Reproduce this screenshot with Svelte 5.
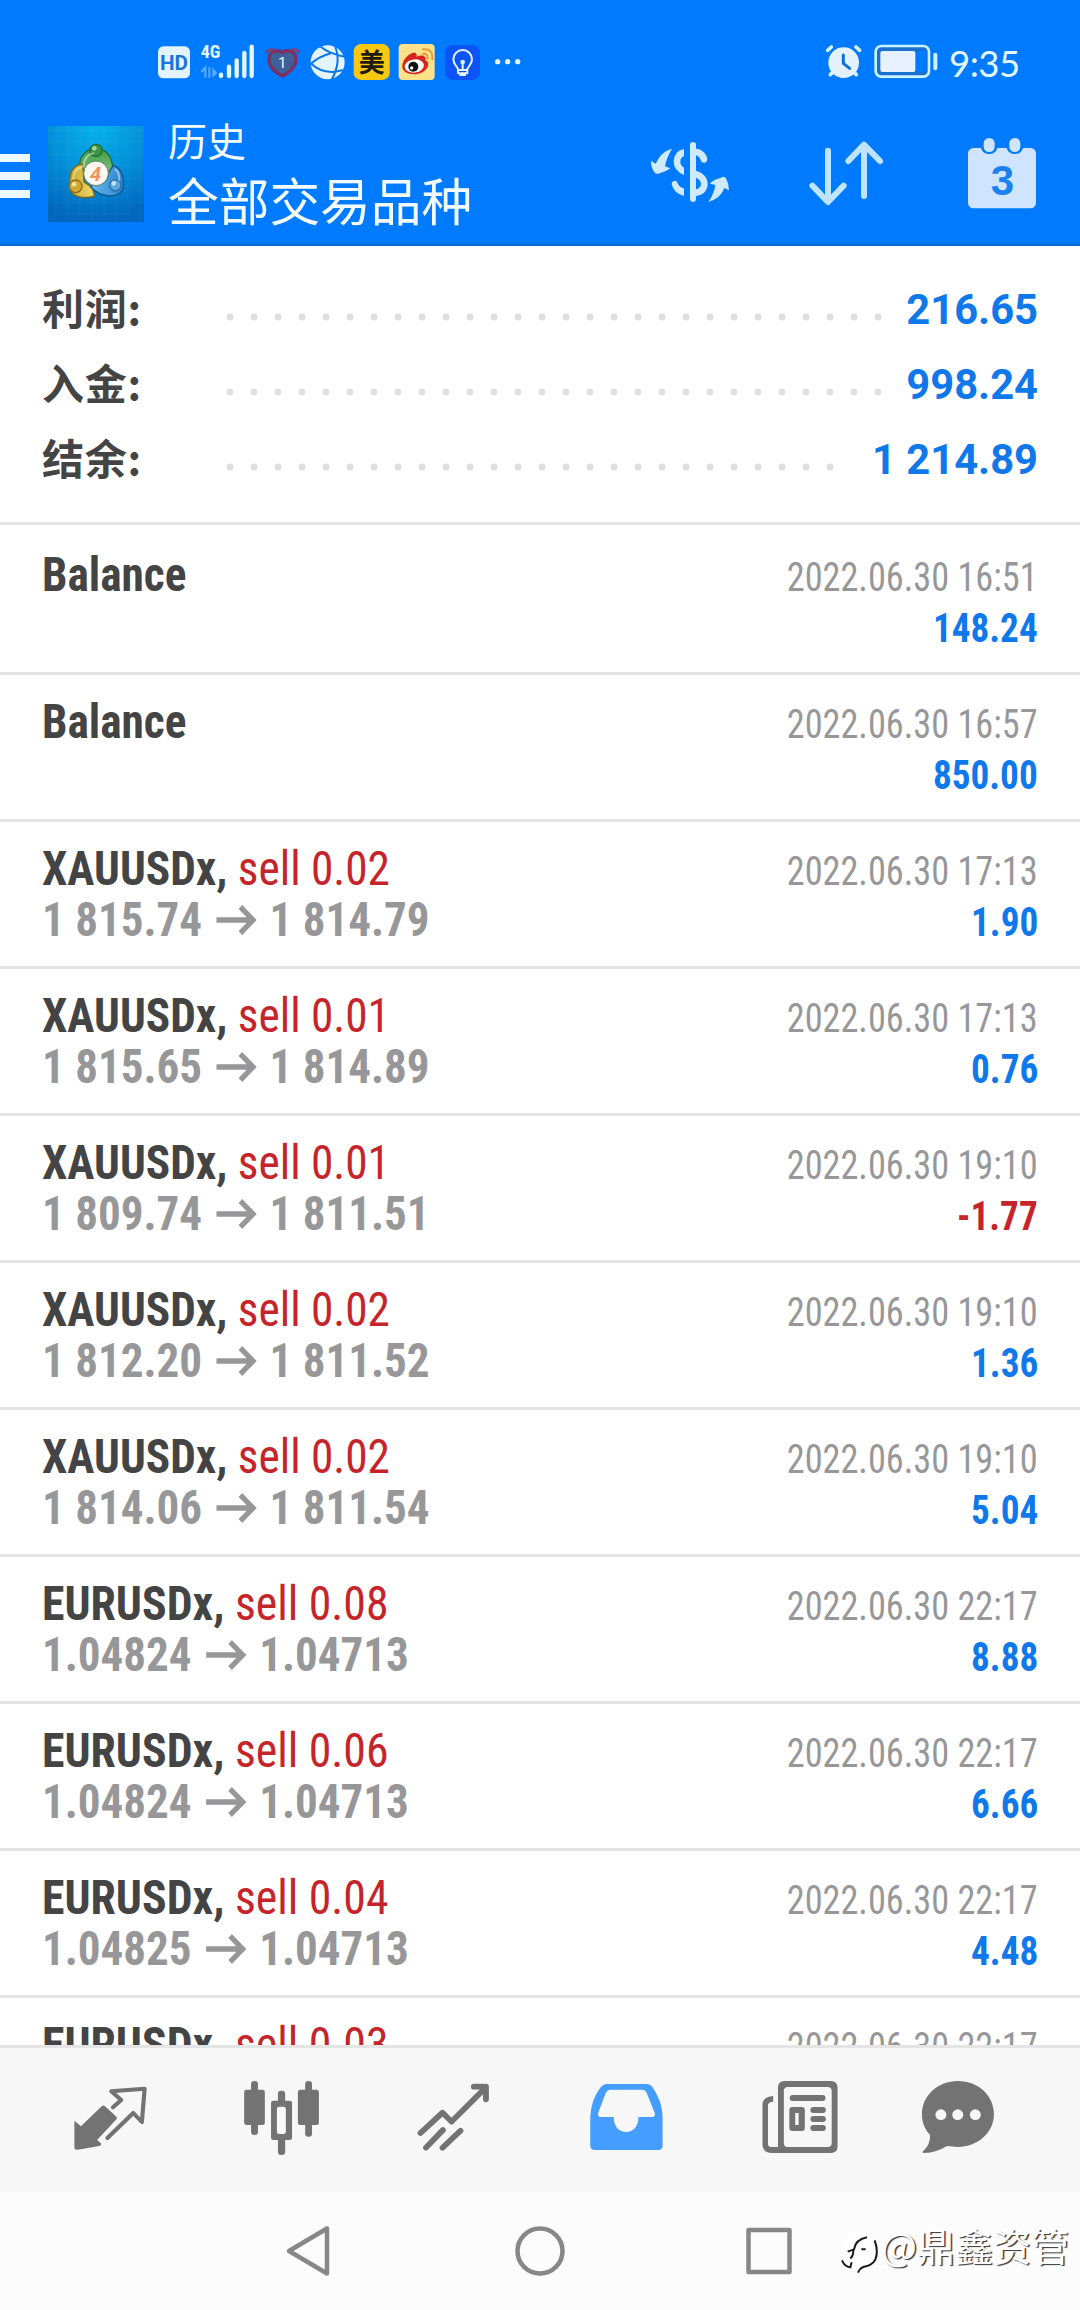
<script lang="ts">
  type Deal = {
    symbol: string;
    volume?: string;
    open?: string;
    close?: string;
    time: string;
    profit: string;
  };

  const summary = [
    { label: '利润:', value: '216.65' },
    { label: '入金:', value: '998.24' },
    { label: '结余:', value: '1 214.89' },
  ];

  const deals: Deal[] = [
    { symbol: 'Balance', time: '2022.06.30 16:51', profit: '148.24' },
    { symbol: 'Balance', time: '2022.06.30 16:57', profit: '850.00' },
    { symbol: 'XAUUSDx', volume: '0.02', open: '1 815.74', close: '1 814.79', time: '2022.06.30 17:13', profit: '1.90' },
    { symbol: 'XAUUSDx', volume: '0.01', open: '1 815.65', close: '1 814.89', time: '2022.06.30 17:13', profit: '0.76' },
    { symbol: 'XAUUSDx', volume: '0.01', open: '1 809.74', close: '1 811.51', time: '2022.06.30 19:10', profit: '-1.77' },
    { symbol: 'XAUUSDx', volume: '0.02', open: '1 812.20', close: '1 811.52', time: '2022.06.30 19:10', profit: '1.36' },
    { symbol: 'XAUUSDx', volume: '0.02', open: '1 814.06', close: '1 811.54', time: '2022.06.30 19:10', profit: '5.04' },
    { symbol: 'EURUSDx', volume: '0.08', open: '1.04824', close: '1.04713', time: '2022.06.30 22:17', profit: '8.88' },
    { symbol: 'EURUSDx', volume: '0.06', open: '1.04824', close: '1.04713', time: '2022.06.30 22:17', profit: '6.66' },
    { symbol: 'EURUSDx', volume: '0.04', open: '1.04825', close: '1.04713', time: '2022.06.30 22:17', profit: '4.48' },
    { symbol: 'EURUSDx', volume: '0.03', open: '1.04825', close: '1.04713', time: '2022.06.30 22:17', profit: '3.36' },
  ];
</script>

<div class="screen">
  <header>
    <div class="status">
      <div class="status-left">
        <!-- HD badge -->
        <svg viewBox="50 0 115 210">
          <rect x="53" y="49" width="96" height="96" rx="16" fill="#e3f3ff" />
          <text x="101" y="120" class="hd">HD</text>
        </svg>
        <!-- 4G signal -->
        <svg viewBox="165 0 195 210">
          <text x="182" y="85" class="net">4G</text>
          <path d="M196 143V112L184 126M208 112V143" fill="none" stroke="#5bacff" stroke-width="6" />
          <path d="M217 112V143L232 129Z" fill="#5bacff" />
          <g stroke="#e3f8ff" stroke-width="13" stroke-linecap="round">
            <path d="M243 134V138M267 110V138M290 91V138M313 69V138M335 50V138" />
          </g>
        </svg>
        <!-- heart alarm -->
        <svg viewBox="360 0 135 210">
          <path d="M379 70Q382 56 402 59M453 59Q473 56 476 70" fill="none" stroke="#6f4a80" stroke-width="9" />
          <path d="M427 138C404 126 386 108 387 86C389 61 414 58 427 67C440 58 466 61 468 86C468 108 450 126 427 138Z" fill="#3d6098" stroke="#7d2f60" stroke-width="10" />
          <text x="427" y="113" class="one">1</text>
        </svg>
        <!-- globe -->
        <svg viewBox="495 0 133 210">
          <circle cx="563" cy="97" r="51" fill="#e3f4ff" />
          <g fill="none" stroke="#0a78ea" stroke-width="6">
            <path d="M542 50Q566 70 614 80M586 51Q604 97 575 149M572 70Q536 80 511 103M511 99Q552 138 608 120" />
          </g>
        </svg>
        <!-- meituan -->
        <svg viewBox="628 0 135 210">
          <rect x="642" y="42" width="108" height="108" rx="22" fill="#f8c811" />
          <text x="696" y="126" class="mei">美</text>
        </svg>
        <!-- weibo -->
        <svg viewBox="763 0 137 210">
          <rect x="777" y="42" width="108" height="108" rx="12" fill="#fae18a" />
          <path d="M788 112C786 92 806 72 818 69C828 66 834 73 830 80C844 73 862 76 857 91C870 96 867 108 860 117C844 139 792 139 788 112Z" fill="#d8241f" />
          <ellipse cx="824" cy="108" rx="29" ry="20" fill="#fff" transform="rotate(-8 824 108)" />
          <circle cx="821" cy="110" r="15" fill="#111" />
          <circle cx="816" cy="114" r="5" fill="#fff" />
          <path d="M850 72Q864 68 864 86M850 58Q880 54 878 88" fill="none" stroke="#e89a38" stroke-width="6" stroke-linecap="round" />
        </svg>
        <!-- bulb -->
        <svg viewBox="900 0 140 210">
          <rect x="915" y="45" width="105" height="105" rx="24" fill="#0b55f7" />
          <g fill="none" stroke="#e8f2ff" stroke-width="6" stroke-linejoin="round">
            <path d="M954 130V118C952 109 940 103 940 88A28 28 0 0 1 996 88C996 103 984 109 982 118V130ZM954 120H982M968 118V98" />
          </g>
          <circle cx="968" cy="96" r="7" fill="#e8f2ff" />
          <path d="M958 132H978V138H958Z" fill="#e8f2ff" />
        </svg>
        <svg viewBox="1040 0 120 210">
          <g fill="#e3f4ff">
            <circle cx="1072" cy="95" r="8" />
            <circle cx="1102" cy="95" r="8" />
            <circle cx="1132" cy="95" r="8" />
          </g>
        </svg>
      </div>
      <div class="status-right">
        <!-- alarm clock -->
        <svg viewBox="60 0 140 210">
          <g stroke="#d5f2ff" stroke-width="11" stroke-linecap="round">
            <path d="M83 61L94 51M179 61L168 51M91 134L98 127M169 134L162 127" />
          </g>
          <circle cx="131" cy="98" r="46" fill="#e3f1ff" />
          <path d="M130 75V100L149 115" fill="none" stroke="#1470cf" stroke-width="9" stroke-linecap="round" stroke-linejoin="round" />
        </svg>
        <!-- battery -->
        <svg viewBox="200 0 220 210">
          <rect x="226" y="48" width="160" height="92" rx="17" fill="#1a70d0" stroke="#c9f3ff" stroke-width="8" />
          <rect x="345" y="62" width="34" height="64" fill="#007aff" />
          <rect x="240" y="63" width="105" height="63" rx="6" fill="#e8f1ff" />
          <rect x="399" y="68" width="12" height="53" rx="6" fill="#c9f3ff" />
        </svg>
        <span class="clock">9:35</span>
      </div>
    </div>

    <div class="app-bar">
      <svg class="menu" viewBox="0 0 144 438">
        <path d="M0 162H90V186H0ZM0 216H90V240H0ZM0 270H90V294H0Z" fill="#eef9ff" />
      </svg>
      <svg class="logo" viewBox="144 78 288 288">
        <defs>
          <radialGradient id="sky" cx=".5" cy="0" r="1">
            <stop offset="0" stop-color="#06b2ee" />
            <stop offset=".5" stop-color="#0390d8" />
            <stop offset="1" stop-color="#0065bd" />
          </radialGradient>
          <linearGradient id="green" x2="0" y2="1">
            <stop offset="0" stop-color="#3c9a48" />
            <stop offset="1" stop-color="#8cc97c" />
          </linearGradient>
          <linearGradient id="gold">
            <stop offset="0" stop-color="#c9a228" />
            <stop offset="1" stop-color="#f1de6a" />
          </linearGradient>
          <linearGradient id="azure">
            <stop offset="0" stop-color="#66b8ec" />
            <stop offset="1" stop-color="#2b83cf" />
          </linearGradient>
        </defs>
        <rect x="144" y="78" width="288" height="288" fill="url(#sky)" />
        <path d="M168 78V366M204 78V366M240 78V366M276 78V366M312 78V366M348 78V366M384 78V366M420 78V366M144 90H432M144 126H432M144 162H432M144 198H432M144 234H432M144 270H432M144 306H432M144 342H432" stroke="#fff" stroke-opacity=".09" stroke-width="2" />
        <g stroke-width="4">
          <path d="M238 205C238 160 265 146 288 146C316 146 340 165 339 220L316 232C314 200 306 185 288 184C268 184 260 195 256 212Z" fill="url(#green)" stroke="#1d6c3d" />
          <path d="M248 192C212 196 208 225 208 262C214 292 250 298 284 288L276 262L252 246Z" fill="url(#gold)" stroke="#7a6a21" />
          <path d="M340 196C366 206 372 235 370 262C362 294 310 298 272 262L284 246C306 258 322 244 326 218Z" fill="url(#azure)" stroke="#16568f" />
          <circle cx="288" cy="151" r="18" fill="#3d9544" stroke="#236b32" />
          <circle cx="227" cy="259" r="19" fill="#d3a936" stroke="#8a6d20" />
          <circle cx="346" cy="256" r="17" fill="#5fa9da" stroke="#2a6ea8" />
        </g>
        <path d="M250 200Q254 164 280 160M220 236Q222 206 244 202M358 240Q358 216 346 208" fill="none" stroke="#fff" stroke-opacity=".45" stroke-width="6" stroke-linecap="round" />
        <circle cx="283" cy="145" r="7" fill="#a5d79c" />
        <circle cx="222" cy="253" r="7" fill="#f6e29a" />
        <circle cx="341" cy="250" r="7" fill="#c5e5f7" />
        <circle cx="288" cy="220" r="37" fill="#fff7f2" stroke="#586" stroke-width="3" />
        <text x="287" y="242" class="four">4</text>
      </svg>
      <div class="titles">
        <span class="title">历史</span>
        <span class="subtitle">全部交易品种</span>
      </div>
      <div class="tools">
        <!-- symbols -->
        <svg viewBox="60 0 420 408">
          <g fill="#cfe9ff">
            <path d="M156 116Q139 144 135 169L151 175Q140 184 121 189Q110 195 103 187Q92 170 93 152L107 161Q123 124 156 116Z" />
            <path d="M265 276Q283 250 286 225L270 221Q280 209 300 205Q310 196 318 205Q326 220 327 241L313 234Q303 264 265 276Z" />
            <path d="M210 104Q210 96 219 96Q228 96 228 104V116C246 116 262 134 262 148Q260 160 250 158Q242 156 242 149Q238 139 228 136V182C250 188 263 203 263 222C263 242 249 256 228 258V268Q227 276 219 276Q210 275 210 268ZM228 203V238Q243 233 243 221Q242 209 228 203Z" fill-rule="evenodd" />
            <path d="M192 117V138Q181 143 181 155Q181 166 192 173V195Q161 181 161 155Q162 123 192 117Z" />
            <path d="M192 235V258Q162 251 155 223Q155 212 166 212Q172 213 174 222Q179 232 192 235Z" />
          </g>
        </svg>
        <!-- sort -->
        <svg viewBox="480 0 450 408">
          <path d="M624 122V274M577 227L624 276L671 227M732 258V106M685 153L732 104L780 153" fill="none" stroke="#bfe4ff" stroke-width="18" stroke-linecap="round" stroke-linejoin="round" />
        </svg>
        <!-- calendar -->
        <svg viewBox="930 0 450 408">
          <rect x="1044" y="114" width="204" height="181" rx="16" fill="#cfe4ff" />
          <rect x="1082" y="78" width="51" height="54" rx="24" fill="#007aff" />
          <rect x="1159" y="78" width="51" height="54" rx="24" fill="#007aff" />
          <rect x="1091" y="84" width="33" height="42" rx="16" fill="#cfe4ff" />
          <rect x="1168" y="84" width="33" height="42" rx="16" fill="#cfe4ff" />
          <text x="1147" y="256" class="day">3</text>
        </svg>
      </div>
    </div>
  </header>

  <section class="summary">
    {#each summary as item}
      <div class="summary-row">
        <span class="label">{item.label}</span>
        <span class="leader"></span>
        <span class="total">{item.value}</span>
      </div>
    {/each}
  </section>

  <main>
    {#each deals as deal}
      <article>
        <div class="line">
          <span class="name" class:wide={deal.symbol === 'EURUSDx'}>
            {#if deal.volume}{deal.symbol}, <span class="side">sell {deal.volume}</span>{:else}{deal.symbol}{/if}
          </span>
          <time>{deal.time}</time>
        </div>
        <div class="line">
          <span class="prices">
            {#if deal.open}
              <span>{deal.open}</span>
              <svg class="arrow" viewBox="0 0 42 30">
                <path d="M0 15H39M25.500 2L39 15L25.500 28" fill="none" stroke="#979799" stroke-width="5.500" />
              </svg>
              <span>{deal.close}</span>
            {:else}
              <span>&nbsp;</span>
            {/if}
          </span>
          <span class="profit" class:loss={deal.profit.startsWith('-')}>{deal.profit}</span>
        </div>
      </article>
    {/each}
  </main>

  <nav class="tabs">
    <!-- quotes -->
    <svg viewBox="24 68 172 144">
      <g transform="scale(.3444 .3333)">
        <path d="M218 424L235 439L296 378Q300 375 304 378L338 410Q341 414 338 418L282 480L293 490Q295 496 288 498L226 509Q216 510 216 504V426Q216 422 218 424Z" fill="#737373" />
        <path d="M328 382L352 360L323 334L420 326L412 426L387 399L312 474" fill="none" stroke="#737373" stroke-width="12" stroke-linejoin="round" stroke-linecap="round" />
      </g>
    </svg>
    <!-- chart -->
    <svg viewBox="196 68 172 144">
      <g transform="scale(.3444 .3333)" fill="#737373">
        <rect x="709" y="329" width="60" height="106" rx="7" />
        <rect x="729" y="303" width="20" height="162" rx="9" />
        <rect x="865" y="329" width="61" height="106" rx="7" />
        <rect x="886" y="303" width="20" height="167" rx="9" />
        <rect x="807" y="332" width="21" height="40" rx="9" />
        <rect x="807" y="470" width="21" height="55" rx="9" />
        <rect x="787" y="362" width="61" height="118" rx="7" />
        <rect x="804" y="380" width="26" height="82" rx="7" fill="#f7f7f7" />
      </g>
    </svg>
    <!-- trade -->
    <svg viewBox="368 68 172 144">
      <g transform="scale(.3444 .3333)" fill="none" stroke="#737373" stroke-width="17" stroke-linecap="round" stroke-linejoin="round">
        <path d="M1221 459L1285 398L1311 425L1406 327" />
        <path d="M1376 320H1411V358" />
        <path d="M1237 503L1286 450M1285 503L1337 452" />
      </g>
    </svg>
    <!-- history -->
    <svg viewBox="0 68 172 144">
      <g transform="scale(.3444 .3333)">
        <path d="M192 312H312Q321 313 327 322Q355 365 356 410V498Q355 509 344 510H159Q147 509 146 498V410Q148 360 176 322Q183 313 192 312ZM203 329Q195 330 191 338L168 401Q168 410 174 411H214C214 437 227 456 250 456C273 456 286 437 286 411H327Q335 409 334 402L310 339Q306 330 299 329Z" fill="#449dff" fill-rule="evenodd" />
      </g>
    </svg>
    <!-- news -->
    <svg viewBox="172 68 172 144">
      <g transform="scale(.3444 .3333)" fill="#737373">
        <path d="M709 303H845Q863 304 864 321V501Q863 518 845 519H670Q648 518 646 496V373Q648 349 677 348V365Q663 366 662 375V493Q663 501 671 501H691V321Q692 304 709 303ZM718 321Q709 322 708 331V491Q709 500 718 501H836Q846 500 847 491V331Q846 322 836 321Z" fill-rule="evenodd" />
        <rect x="725" y="345" width="104" height="18" rx="9" />
        <rect x="724" y="381" width="45" height="72" rx="9" />
        <rect x="741" y="399" width="10" height="36" fill="#f7f7f7" />
        <rect x="785" y="381" width="45" height="18" rx="9" />
        <rect x="785" y="408" width="45" height="18" rx="9" />
        <rect x="785" y="435" width="45" height="18" rx="9" />
      </g>
    </svg>
    <!-- messages -->
    <svg viewBox="344 68 172 144">
      <g transform="scale(.3444 .3333)">
        <path d="M1213 303C1273 303 1318 346 1318 403C1318 459 1270 501 1213 501Q1197 500 1182 498Q1150 518 1116 519Q1106 518 1115 511Q1132 496 1133 466C1117 447 1109 427 1109 403C1109 346 1156 303 1213 303Z" fill="#737373" />
        <g fill="#f7f7f7">
          <circle cx="1164" cy="404" r="16" />
          <circle cx="1213" cy="404" r="16" />
          <circle cx="1264" cy="404" r="16" />
        </g>
      </g>
    </svg>
  </nav>

  <footer>
    <svg viewBox="0 0 840 118">
      <g fill="none" stroke="#878787" stroke-width="4.500" stroke-linejoin="round">
        <path d="M327 36.500V81.500L289 59Z" />
        <circle cx="540" cy="59" r="22.500" />
        <rect x="748.500" y="38" width="41" height="42" />
      </g>
    </svg>
    <div class="watermark">
      <svg viewBox="30 40 120 150">
        <path d="M36 150Q30 90 60 66Q110 50 132 92Q148 130 130 158Q100 165 84 188L66 174Q42 176 36 150Z" fill="#fff" />
        <path d="M53 126L72 119Q76 90 111 83M70 122Q70 140 61 146M94 119H107M134 92Q146 124 136 150Q126 167 102 171Q89 176 84 189M36 152Q44 171 61 173L65 158" fill="none" stroke="#1a1a1a" stroke-width="6" />
      </svg>
      <span>@鼎鑫资管</span>
    </div>
  </footer>
</div>

<style>
  :global(body) {
    background: #fff;
  }

  .screen {
    width: 1080px;
    height: 2310px;
    display: flex;
    flex-direction: column;
    overflow: hidden;
    background: #fff;
    font-family: 'Roboto Condensed', Roboto, 'Noto Sans CJK SC', sans-serif;
  }

  svg {
    display: block;
    flex-shrink: 0;
  }

  header {
    height: 246px;
    box-sizing: border-box;
    flex-shrink: 0;
    background: #007aff;
    border-bottom: 2px solid #0a6ccd;
  }

  /* Status bar */
  .status {
    height: 70px;
    padding: 30px 0 0 156.67px;
    display: flex;
    justify-content: space-between;
  }

  .status-left,
  .status-right {
    display: flex;
  }

  .status svg {
    height: 70px;
  }

  .status-right {
    width: 260px;
  }

  .clock {
    margin-left: 9px;
    font-family: Lato, sans-serif;
    font-size: 36.5px;
    line-height: 66px;
    letter-spacing: -0.5px;
    color: #e3f8ff;
  }

  .hd {
    font: 700 62px Roboto, sans-serif;
    fill: #1a75d8;
    text-anchor: middle;
  }

  .net {
    font: 700 54px 'Roboto Condensed', Roboto, sans-serif;
    font-stretch: 75%;
    fill: #e3f8ff;
  }

  .one {
    font: 400 46px Roboto, sans-serif;
    fill: #e3f4ff;
    text-anchor: middle;
  }

  .mei {
    font: 700 78px 'Noto Sans CJK SC', sans-serif;
    fill: #1d1a10;
    text-anchor: middle;
  }

  /* App bar */
  .app-bar {
    height: 144px;
    display: flex;
    align-items: flex-start;
  }

  .menu {
    width: 48px;
    height: 146px;
  }

  .logo {
    width: 96px;
    height: 96px;
    margin-top: 26px;
  }

  .four {
    font: italic 700 60px Roboto, sans-serif;
    fill: #f0935c;
    text-anchor: middle;
  }

  .titles {
    flex: 1;
    display: flex;
    flex-direction: column;
    padding: 15px 0 0 24px;
    font-family: 'Noto Sans CJK SC', sans-serif;
    color: #f2fbff;
  }

  .title {
    font-size: 39px;
    line-height: 48px;
  }

  .subtitle {
    font-size: 50.7px;
    line-height: 72px;
  }

  .tools {
    display: flex;
    margin-top: 10px;
  }

  .tools svg {
    height: 136px;
  }

  .day {
    font: 700 126px 'Liberation Sans', sans-serif;
    fill: #1a80f0;
    text-anchor: middle;
  }

  /* Totals */
  .summary {
    height: 279px;
    box-sizing: border-box;
    flex-shrink: 0;
    padding: 26px 42px 0 42px;
    border-bottom: 3px solid #e4e4e4;
  }

  .summary-row {
    height: 75px;
    display: flex;
    align-items: center;
    font-weight: 700;
    font-size: 41.7px;
  }

  .label {
    width: 176px;
    margin-top: -2px;
    font-family: 'Noto Sans CJK SC', sans-serif;
    font-size: 42px;
    letter-spacing: 0.7px;
    line-height: 70px;
    color: #444;
    transform: translateY(-2px);
  }

  .leader {
    flex: 1;
    height: 8px;
    margin-top: 15px;
    margin-right: 23px;
    background: radial-gradient(circle at 12px 4px, #dedede 3px, transparent 4px) 0 0 / 24px 8px repeat-x;
  }

  .total {
    font-family: Roboto, sans-serif;
    color: #0f78ea;
  }

  /* Deals */
  main {
    flex: 1;
    min-height: 0;
    overflow: hidden;
    padding-top: 3px;
  }

  article {
    height: 147px;
    box-sizing: border-box;
    padding: 21px 42px 0 42px;
    border-bottom: 3px solid #e4e4e4;
    font-stretch: 75%;
  }

  .line {
    height: 51px;
    display: flex;
    justify-content: space-between;
    align-items: baseline;
    line-height: 51px;
    white-space: nowrap;
  }

  /* the condensed face is squeezed a little further */
  .name,
  .prices {
    font-size: 48px;
    font-weight: 700;
    transform: scaleX(0.944);
    transform-origin: left;
  }

  .name {
    color: #444;
  }

  .name.wide {
    transform: scaleX(0.953);
  }

  .side {
    font-weight: 400;
    color: #c5242a;
  }

  time,
  .profit {
    font-size: 40px;
    transform-origin: right;
  }

  time {
    color: #979799;
    transform: scaleX(0.907);
  }

  .prices {
    display: flex;
    align-items: center;
    color: #979799;
    transform: scaleX(0.938);
  }

  .arrow {
    width: 44px;
    height: 30px;
    margin: 0 14px;
  }

  .profit {
    font-weight: 700;
    color: #0f78ea;
    transform: scaleX(0.93);
  }

  .loss {
    color: #c5242a;
  }

  /* Bottom tabs */
  .tabs {
    height: 147px;
    box-sizing: border-box;
    flex-shrink: 0;
    display: flex;
    padding-left: 24px;
    background: #f7f7f7;
    border-top: 3px solid #e4e4e4;
  }

  .tabs svg {
    width: 172px;
    height: 144px;
  }

  footer {
    height: 118px;
    flex-shrink: 0;
    display: flex;
    background: #fcfcfc;
  }

  footer > svg {
    width: 840px;
    height: 118px;
  }

  .watermark {
    display: flex;
    align-items: center;
    height: 112px;
    font-family: 'Noto Sans CJK SC', sans-serif;
    font-size: 38px;
    color: #fff;
    text-shadow: 1.5px 1px 1px #333;
    white-space: nowrap;
  }

  .watermark svg {
    width: 40px;
    height: 50px;
  }

  .watermark span {
    margin: -8px 0 0 1px;
  }
</style>
